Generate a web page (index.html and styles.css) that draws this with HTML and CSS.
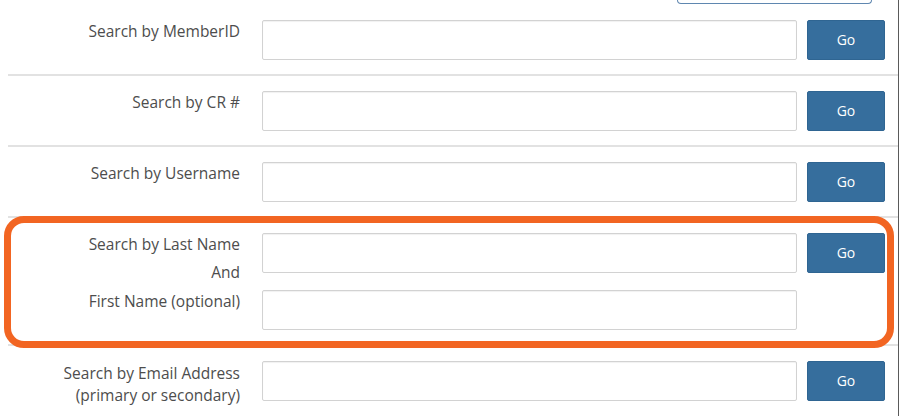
FILE: index.html
```html
<!DOCTYPE html>
<html lang="en">
<head>
<meta charset="utf-8">
<title>Member Search</title>
<link rel="stylesheet" href="styles.css">
</head>
<body>
<div class="page">
  <div class="topbar"><div class="top-btn"></div></div>

  <div class="row">
    <div class="label"><div class="line">Search by MemberID</div></div>
    <div class="fields"><input class="field" type="text"></div>
    <button class="go">Go</button>
  </div>

  <div class="row">
    <div class="label"><div class="line">Search by CR #</div></div>
    <div class="fields"><input class="field" type="text"></div>
    <button class="go">Go</button>
  </div>

  <div class="row">
    <div class="label"><div class="line">Search by Username</div></div>
    <div class="fields"><input class="field" type="text"></div>
    <button class="go">Go</button>
  </div>

  <div class="row row-highlight">
    <div class="label">
      <div class="line">Search by Last Name</div>
      <div class="line line-and">And</div>
      <div class="line line-first">First Name (optional)</div>
    </div>
    <div class="fields fields-stack">
      <input class="field" type="text">
      <input class="field" type="text">
    </div>
    <button class="go">Go</button>
  </div>

  <div class="row row-last">
    <div class="label">
      <div class="line line-tight">Search by Email Address</div>
      <div class="line line-tight">(primary or secondary)</div>
    </div>
    <div class="fields"><input class="field" type="text"></div>
    <button class="go">Go</button>
  </div>
</div>
</body>
</html>
```

FILE: styles.css
```css
html, body {
  margin: 0;
  padding: 0;
  background: #ffffff;
}

body {
  font-family: "Open Sans", "Liberation Sans", Arial, sans-serif;
  font-size: 15.5px;
  color: #4d4d4d;
}

.page {
  box-sizing: border-box;
  width: 899px;
  height: 416px;
  border-right: 1px solid #5a5a5a;
  overflow: hidden;
}

.topbar {
  height: 5px;
  display: flex;
}

.top-btn {
  box-sizing: border-box;
  margin-left: 677px;
  width: 195px;
  height: 4px;
  border: 1px solid #5f87b0;
  border-top: none;
  border-radius: 0 0 4px 4px;
}

.row {
  position: relative;
  display: flex;
  align-items: flex-start;
  margin-left: 8px;
  padding: 15px 0 14px;
  border-bottom: 2px solid #e2e2e2;
}

.row-last {
  border-bottom: none;
}

.label {
  box-sizing: border-box;
  width: 232px;
  margin-right: 22px;
  text-align: right;
  padding-top: 1px;
}

.line {
  line-height: 20px;
  white-space: nowrap;
}

.line-and {
  margin-top: 8px;
}

.line-first {
  margin-top: 9px;
}

.line-tight {
  line-height: 22px;
}

.fields {
  width: 535px;
  margin-right: 10px;
  display: flex;
  flex-direction: column;
}

.fields-stack {
  gap: 17px;
}

.field {
  box-sizing: border-box;
  display: block;
  width: 535px;
  height: 40px;
  margin: 0;
  padding: 6px 12px;
  border: 1px solid #d2d2d2;
  border-radius: 2px;
  background: #ffffff;
  box-shadow: inset 0 1px 1px rgba(0, 0, 0, 0.06);
  font: inherit;
}

.go {
  box-sizing: border-box;
  width: 78px;
  height: 40px;
  margin: 0;
  padding: 0;
  border: 1px solid #2f6592;
  border-radius: 2px;
  background: #366e9d;
  color: #ffffff;
  font-family: "Open Sans", "Liberation Sans", Arial, sans-serif;
  font-size: 14px;
  line-height: 38px;
  text-align: center;
}

.row-highlight::after {
  content: "";
  position: absolute;
  top: -2px;
  left: -4px;
  right: 4px;
  bottom: -4px;
  border: 7px solid #f26522;
  border-radius: 20px;
  pointer-events: none;
}
```
